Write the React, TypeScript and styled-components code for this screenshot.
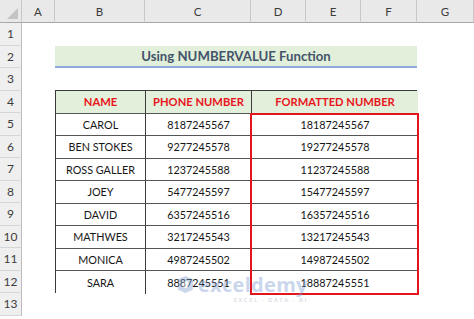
import React from "react";
import styled, { createGlobalStyle } from "styled-components";

const Global = createGlobalStyle`
  html, body { margin: 0; padding: 0; background: #fff; }
  body { font-family: Lato, "Open Sans", sans-serif; overflow: hidden; }
`;

const Sheet = styled.div`
  position: relative;
  width: 474px;
  height: 319px;
  display: grid;
  grid-template-columns: 22px 33px 90px 106px 55px 55px 56px 1fr;
  grid-template-rows: 23px repeat(13, 22.5px);
  background: #fff;
  overflow: hidden;
`;

const Corner = styled.div`
  grid-column: 1;
  grid-row: 1;
  background: #e9e9e9;
  border-right: 1px solid #c8c8c8;
  border-bottom: 1px solid #a8a8a8;
  position: relative;
  &::after {
    content: "";
    position: absolute;
    right: 3px;
    bottom: 3px;
    width: 0;
    height: 0;
    border-left: 11px solid transparent;
    border-bottom: 11px solid #c4c4c4;
  }
`;

const ColHead = styled.div<{ $col: number }>`
  grid-column: ${(p) => p.$col};
  grid-row: 1;
  background: #e9e9e9;
  border-right: 1px solid #c8c8c8;
  border-bottom: 1px solid #a8a8a8;
  display: flex;
  align-items: center;
  justify-content: center;
  font-size: 11.5px;
  color: #3c3c3c;
  padding-top: 1px;
  box-sizing: border-box;
`;

const RowHead = styled.div<{ $row: number }>`
  grid-column: 1;
  grid-row: ${(p) => p.$row};
  background: #efefef;
  border-right: 1px solid #bcbcbc;
  border-bottom: 1px solid #d6d6d6;
  display: flex;
  align-items: center;
  justify-content: center;
  font-size: 12px;
  color: #3c3c3c;
  box-sizing: border-box;
`;

const Title = styled.div`
  grid-column: 3 / 8;
  grid-row: 3;
  background: #e2efda;
  border-bottom: 2px solid #8ea9db;
  display: flex;
  align-items: center;
  justify-content: center;
  font-weight: 700;
  font-size: 13.2px;
  color: #44546a;
  box-sizing: border-box;
  padding-top: 1px;
`;

const Table = styled.div`
  grid-column: 3 / 8;
  grid-row: 5 / 14;
  display: grid;
  grid-template-columns: 90px 106px 166px;
  grid-template-rows: repeat(9, 22.5px);
  border: 1px solid #3a3a3a;
  margin: -0.5px 0 0 0;
  box-sizing: border-box;
`;

const Cell = styled.div<{
  $col: number;
  $row: number;
  $head?: boolean;
  $last?: boolean;
  $lastRow?: boolean;
}>`
  grid-column: ${(p) => p.$col};
  grid-row: ${(p) => p.$row};
  display: flex;
  align-items: center;
  justify-content: center;
  font-size: ${(p) => (p.$head ? "11.2px" : "10.8px")};
  font-weight: ${(p) => (p.$head ? 700 : 400)};
  color: ${(p) => (p.$head ? "#e8141b" : "#161616")};
  background: ${(p) => (p.$head ? "#e2efda" : "#fff")};
  border-right: ${(p) => (p.$last ? "none" : "1px solid #3a3a3a")};
  border-bottom: ${(p) => (p.$lastRow ? "none" : "1px solid #555")};
  box-sizing: border-box;
  white-space: nowrap;
`;

const RedBox = styled.div`
  grid-column: 3;
  grid-row: 2 / 10;
  border: 2px solid #e3151c;
  margin: -1px -1px -1px -2px;
  pointer-events: none;
  z-index: 1;
`;

const Watermark = styled.div`
  position: absolute;
  left: 176px;
  top: 275px;
  display: flex;
  align-items: flex-start;
  gap: 3px;
  opacity: 0.4;
  pointer-events: none;
  z-index: 2;
`;

const WmText = styled.div`
  display: flex;
  flex-direction: column;
  align-items: flex-end;
  line-height: 1;
`;

const WmBig = styled.span`
  font-family: "Open Sans", sans-serif;
  font-weight: 700;
  font-size: 20px;
  color: #7b9ad0;
  letter-spacing: 0.3px;
`;

const WmSmall = styled.span`
  font-family: "Open Sans", sans-serif;
  font-size: 6px;
  font-weight: 600;
  color: #9aa3b5;
  letter-spacing: 1.5px;
  margin-top: 2px;
`;

const cols = ["A", "B", "C", "D", "E", "F", "G"];
const rows = [
  ["CAROL", "8187245567", "18187245567"],
  ["BEN STOKES", "9277245578", "19277245578"],
  ["ROSS GALLER", "1237245588", "11237245588"],
  ["JOEY", "5477245597", "15477245597"],
  ["DAVID", "6357245516", "16357245516"],
  ["MATHWES", "3217245543", "13217245543"],
  ["MONICA", "4987245502", "14987245502"],
  ["SARA", "8887245551", "18887245551"],
];

export default function App() {
  return (
    <>
      <Global />
      <Sheet>
        <Corner />
        {cols.map((c, i) => (
          <ColHead key={c} $col={i + 2}>
            {c}
          </ColHead>
        ))}
        {Array.from({ length: 13 }, (_, i) => (
          <RowHead key={i} $row={i + 2}>
            {i + 1}
          </RowHead>
        ))}
        <Title>Using NUMBERVALUE Function</Title>
        <Table>
          <Cell $col={1} $row={1} $head>NAME</Cell>
          <Cell $col={2} $row={1} $head>PHONE NUMBER</Cell>
          <Cell $col={3} $row={1} $head $last>FORMATTED NUMBER</Cell>
          {rows.map((r, i) => {
            const lr = i === rows.length - 1;
            return (
              <React.Fragment key={r[0]}>
                <Cell $col={1} $row={i + 2} $lastRow={lr}>{r[0]}</Cell>
                <Cell $col={2} $row={i + 2} $lastRow={lr}>{r[1]}</Cell>
                <Cell $col={3} $row={i + 2} $last $lastRow={lr}>{r[2]}</Cell>
              </React.Fragment>
            );
          })}
          <RedBox />
        </Table>
        <Watermark>
          <svg width="19" height="19" viewBox="0 0 18 18">
            <path d="M2 4 L9 1 L16 4 L16 14 L9 17 L2 14 Z" fill="#7b9ad0" />
            <path d="M6 7 L9 5.5 L12 7 L12 11 L9 12.5 L6 11 Z" fill="#fff" />
          </svg>
          <WmText>
            <WmBig>exceldemy</WmBig>
            <WmSmall>EXCEL · DATA · BI</WmSmall>
          </WmText>
        </Watermark>
      </Sheet>
    </>
  );
}
